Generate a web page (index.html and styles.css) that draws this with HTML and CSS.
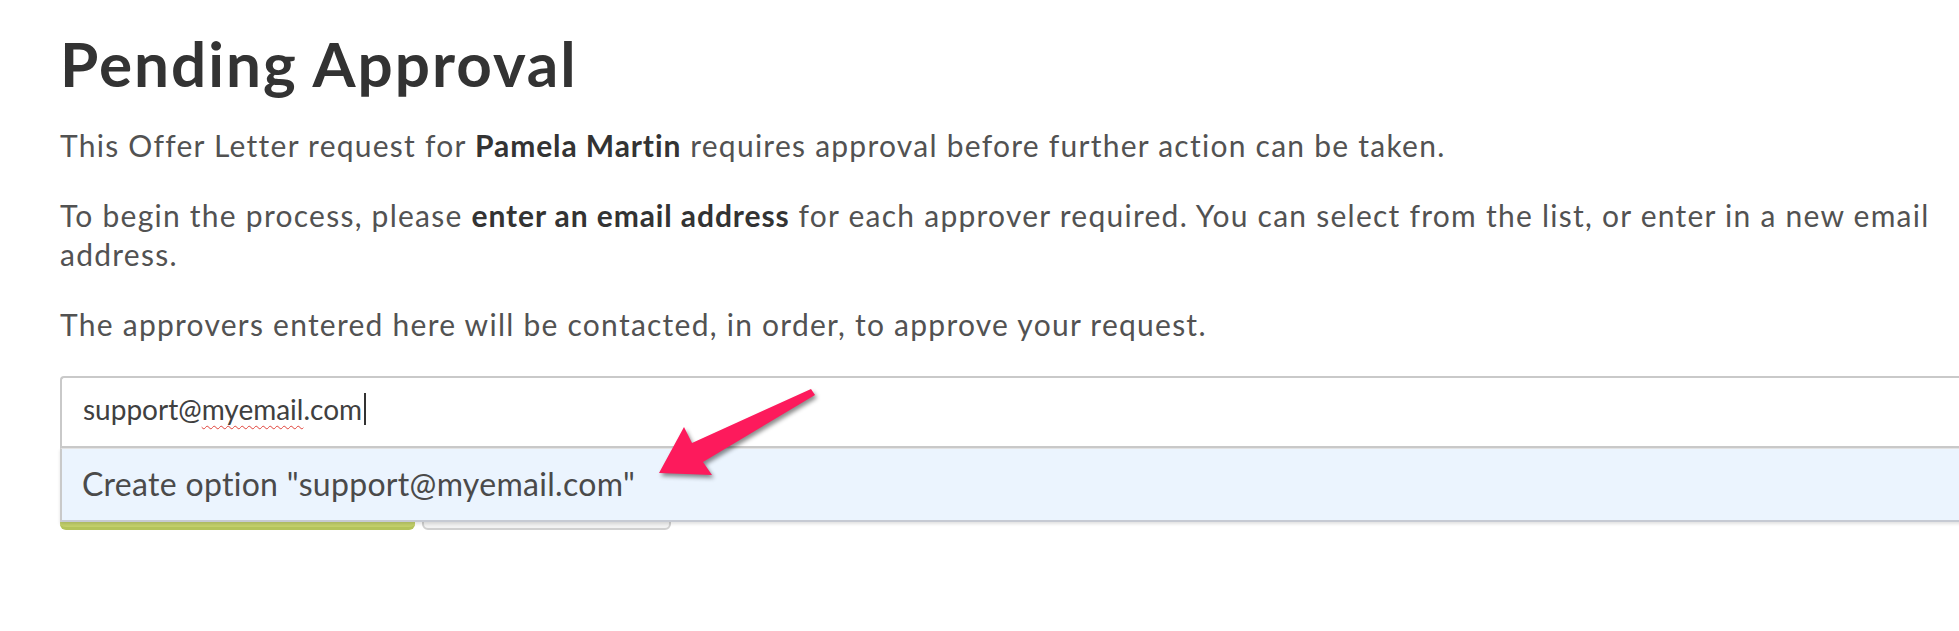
FILE: index.html
```html
<!DOCTYPE html>
<html>
<head>
<meta charset="utf-8">
<link rel="stylesheet" href="styles.css">
</head>
<body>
<div class="page">
  <h1 class="title">Pending Approval</h1>
  <p class="text">This Offer Letter request for <strong>Pamela Martin</strong> requires approval before further action can be taken.</p>
  <p class="text">To begin the process, please <strong>enter an email address</strong> for each approver required. You can select from the list, or enter in a new email address.</p>
  <p class="text">The approvers entered here will be contacted, in order, to approve your request.</p>

  <div class="select">
    <div class="control"><span class="value">support@<span class="typo">myemail</span>.com</span><span class="caret"></span></div>
    <div class="menu">
      <div class="option">Create option "support@myemail.com"</div>
    </div>
    <div class="actions">
      <div class="btn btn-primary"></div>
      <div class="btn btn-secondary"></div>
    </div>
    <svg class="arrow" width="200" height="120" viewBox="0 0 200 120">
      <polygon points="171,9 175,15 63,82 72,95 19,93 44,47 52,63" fill="#fd1a5c"/>
    </svg>
  </div>
</div>
</body>
</html>
```

FILE: styles.css
```css
html, body {
  margin: 0;
  padding: 0;
  background: #ffffff;
  overflow: hidden;
}

body {
  font-family: "Lato", "Open Sans", sans-serif;
  color: #525252;
}

.page {
  padding: 27px 0 0 60px;
  width: 1960px;
}

.title {
  margin: 0 0 27px 0;
  font-size: 62px;
  line-height: 72px;
  font-weight: 700;
  letter-spacing: 2px;
  color: #333333;
}

.text {
  margin: 0 0 31px 0;
  font-size: 30px;
  line-height: 39px;
  letter-spacing: 1.25px;
  width: 1898px;
}

.text strong {
  font-weight: 700;
  color: #333333;
  letter-spacing: 0.9px;
}

.select {
  position: relative;
  width: 1920px;
  margin-top: 32px;
}

.control {
  display: flex;
  align-items: center;
  height: 72px;
  box-sizing: border-box;
  border: 2px solid #c9c9c9;
  border-right: none;
  border-radius: 4px 0 0 0;
  padding: 0 0 6px 21px;
  font-size: 28px;
  color: #404040;
  background: #fff;
}

.typo {
  text-decoration: underline wavy #e0423a;
  text-decoration-thickness: 1px;
  text-underline-offset: 5px;
}

.caret {
  display: inline-block;
  width: 2px;
  height: 32px;
  margin-left: 2px;
  background: #333;
}

.menu {
  position: absolute;
  left: 0;
  right: 0;
  top: 72px;
  background: #ebf4fe;
  border-top: 1px solid #e3e3e3;
  border-left: 2px solid #c9c9c9;
  border-bottom: 2px solid #c6cad3;
  box-shadow: 0 2px 3px rgba(0, 0, 0, 0.12);
  padding: 15px 0 16px 20px;
  z-index: 2;
}

.option {
  font-size: 32px;
  line-height: 40px;
  letter-spacing: 0.3px;
  color: #4a4a4a;
}

.actions {
  display: flex;
  gap: 7px;
  margin-top: 12px;
}

.btn {
  height: 70px;
  box-sizing: border-box;
  border-radius: 6px;
}

.btn-primary {
  width: 355px;
  background: #c3d06b;
  border-bottom: 3px solid #b4c35b;
}

.btn-secondary {
  width: 249px;
  background: #f2f2f2;
  border: 2px solid #d0d0d0;
}

.arrow {
  position: absolute;
  left: 580px;
  top: 4px;
  z-index: 3;
  filter: drop-shadow(2px 3px 2px rgba(0, 0, 0, 0.45));
}
```
